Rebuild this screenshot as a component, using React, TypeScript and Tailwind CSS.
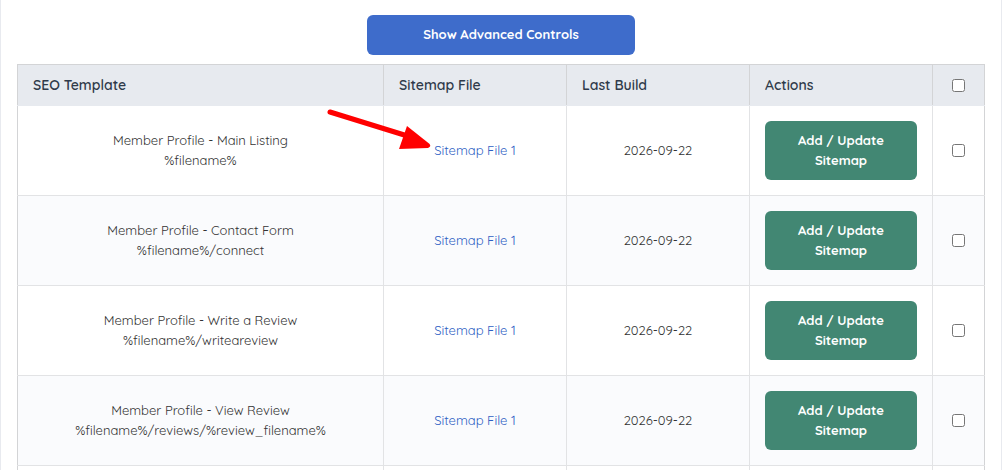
import { clsx } from 'clsx';

type TemplateRow = {
  name: string;
  path: string;
  sitemap: string;
  lastBuild: string;
};

const rows: TemplateRow[] = [
  {
    name: 'Member Profile - Main Listing',
    path: '%filename%',
    sitemap: 'Sitemap File 1',
    lastBuild: '2026-09-22',
  },
  {
    name: 'Member Profile - Contact Form',
    path: '%filename%/connect',
    sitemap: 'Sitemap File 1',
    lastBuild: '2026-09-22',
  },
  {
    name: 'Member Profile - Write a Review',
    path: '%filename%/writeareview',
    sitemap: 'Sitemap File 1',
    lastBuild: '2026-09-22',
  },
  {
    name: 'Member Profile - View Review',
    path: '%filename%/reviews/%review_filename%',
    sitemap: 'Sitemap File 1',
    lastBuild: '2026-09-22',
  },
];

const headings = ['SEO Template', 'Sitemap File', 'Last Build', 'Actions'];

function RowCheckbox({ label }: { label: string }) {
  return <input type="checkbox" aria-label={label} className="block mx-auto size-[13px]" />;
}

function PointerArrow() {
  return (
    <svg
      className="absolute left-[325px] top-[106px] pointer-events-none"
      width="108"
      height="48"
      viewBox="0 0 108 48"
      aria-hidden="true"
    >
      <path d="M4 6 L88 32" stroke="#ff0000" strokeWidth="5" strokeLinecap="round" fill="none" />
      <path d="M81 20 L103 37.5 Q106 40 102 42 L73 43 Z" fill="#ff0000" />
    </svg>
  );
}

function SitemapRow({ row, striped }: { row: TemplateRow; striped: boolean }) {
  return (
    <tr className={clsx('h-[90px]', striped && 'bg-[#fafbfd]')}>
      <td className="border border-[#e2e3e5] border-l-[#d3d4d6] px-2 pb-[2px]">
        {row.name}
        <br />
        {row.path}
      </td>
      <td className="border border-[#e2e3e5] px-2 pb-[2px]">
        <a href="#sitemap" className="text-[#2f5fc4]">
          {row.sitemap}
        </a>
      </td>
      <td className="border border-[#e2e3e5] px-2 pb-[2px]">{row.lastBuild}</td>
      <td className="border border-[#e2e3e5] px-[15px]">
        <button
          type="button"
          className="block w-full rounded-md bg-[#428773] px-5 pt-[9px] pb-[10px] font-bold text-white"
        >
          Add / Update Sitemap
        </button>
      </td>
      <td className="border border-[#e2e3e5] border-r-[#d3d4d6]">
        <RowCheckbox label={`Select ${row.name}`} />
      </td>
    </tr>
  );
}

export default function App() {
  return (
    <main className="relative h-screen overflow-hidden border-x border-[#e8eaef] bg-white px-4 pt-[15px] font-['Quicksand','Lato',sans-serif] text-[13px] leading-5 text-[#333333]">
      <button
        type="button"
        className="mx-auto block h-10 w-[268px] rounded-md bg-[#3e6ccb] pb-[2px] font-bold text-white"
      >
        Show Advanced Controls
      </button>

      <table className="mt-[9px] w-full table-fixed border-collapse text-center">
        <colgroup>
          <col />
          <col className="w-[183px]" />
          <col className="w-[183px]" />
          <col className="w-[183px]" />
          <col className="w-[52px]" />
        </colgroup>
        <thead>
          <tr className="h-[41px] bg-[#e7eaef] text-left text-sm text-[#2f3a4a]">
            {headings.map((heading) => (
              <th
                key={heading}
                className="border border-[#d3d4d6] border-b-[#e7eaef] px-[15px] font-semibold"
              >
                {heading}
              </th>
            ))}
            <th className="border border-[#d3d4d6] border-b-[#e7eaef]">
              <RowCheckbox label="Select all" />
            </th>
          </tr>
        </thead>
        <tbody>
          {rows.map((row, index) => (
            <SitemapRow key={row.path} row={row} striped={index % 2 === 1} />
          ))}
          <tr className="h-5">
            <td className="border border-[#e2e3e5] border-l-[#d3d4d6]" />
            <td className="border border-[#e2e3e5]" />
            <td className="border border-[#e2e3e5]" />
            <td className="border border-[#e2e3e5]" />
            <td className="border border-[#e2e3e5] border-r-[#d3d4d6]" />
          </tr>
        </tbody>
      </table>

      <PointerArrow />
    </main>
  );
}
